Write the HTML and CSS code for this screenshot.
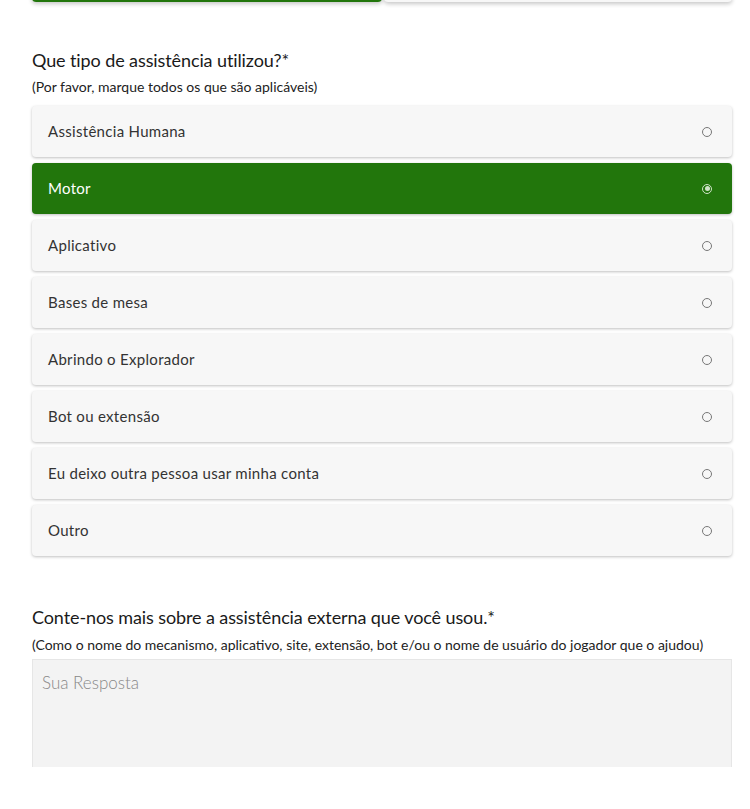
FILE: index.html
```html
<!DOCTYPE html>
<html lang="pt">
<head>
<meta charset="utf-8">
<link rel="stylesheet" href="styles.css">
</head>
<body>
<div class="page">
  <div class="top-cards">
    <div class="top-card green"></div>
    <div class="top-card gray"></div>
  </div>

  <section class="question q1">
    <h2 class="q-title">Que tipo de assistência utilizou?*</h2>
    <p class="q-sub">(Por favor, marque todos os que são aplicáveis)</p>
    <div class="options">
      <div class="option"><span>Assistência Humana</span><span class="radio"></span></div>
      <div class="option selected"><span>Motor</span><span class="radio"></span></div>
      <div class="option"><span>Aplicativo</span><span class="radio"></span></div>
      <div class="option"><span>Bases de mesa</span><span class="radio"></span></div>
      <div class="option"><span>Abrindo o Explorador</span><span class="radio"></span></div>
      <div class="option"><span>Bot ou extensão</span><span class="radio"></span></div>
      <div class="option"><span>Eu deixo outra pessoa usar minha conta</span><span class="radio"></span></div>
      <div class="option"><span>Outro</span><span class="radio"></span></div>
    </div>
  </section>

  <section class="question q2">
    <h2 class="q-title">Conte-nos mais sobre a assistência externa que você usou.*</h2>
    <p class="q-sub">(Como o nome do mecanismo, aplicativo, site, extensão, bot e/ou o nome de usuário do jogador que o ajudou)</p>
    <div class="answer">Sua Resposta</div>
  </section>
</div>
</body>
</html>
```

FILE: styles.css
```css
* { box-sizing: border-box; }
html { overflow: hidden; background: #fff; }
body { margin: 0; padding: 0; font-family: Lato, "Open Sans", sans-serif; color: #222; }
.page { width: 750px; padding: 1px 18px 0 32px; }

.top-cards { display: flex; gap: 2px; margin-top: -49px; height: 50px; }
.top-card { border-radius: 0 0 4px 4px; box-shadow: 0 2px 4px rgba(0,0,0,0.22); }
.top-card.green { flex: 0 0 350px; background: #22760c; }
.top-card.gray { flex: 1; background: #f7f7f7; }

.q1 { margin-top: 47px; }
.q2 { margin-top: 50px; }
.q-title { font-family: Lato, sans-serif; font-weight: 400; font-size: 18px; margin: 0; line-height: 22px; color: #1a1a1a; letter-spacing: -0.1px; }
.q-sub { font-family: Lato, sans-serif; font-size: 14px; margin: 7px 0 0; line-height: 17px; color: #222; }

.options { display: flex; flex-direction: column; gap: 6px; margin-top: 11px; }
.option { height: 51px; display: flex; align-items: center; justify-content: space-between; padding: 0 20px 2px 16px; background: #f7f7f7; border-radius: 4px; box-shadow: 0 1px 3px rgba(0,0,0,0.25); font-family: Lato, sans-serif; font-weight: 400; font-size: 15px; letter-spacing: 0.3px; color: #333; }
.option.selected { background: #22760c; color: #fff; }
.radio { width: 10px; height: 10px; border: 1px solid #777; border-radius: 50%; position: relative; margin-top: 2px; }
.option.selected .radio { border-color: #cfe3c8; }
.option.selected .radio::after { content: ""; position: absolute; left: 1.5px; top: 1.5px; width: 5px; height: 5px; border-radius: 50%; background: #cfe3c8; }

.q2 .q-sub { margin-top: 8px; }
.answer { margin-top: 6px; height: 108px; background: #f3f3f3; border: 1px solid #e6e6e6; border-bottom: none; padding: 12px 9px; font-family: Lato, sans-serif; font-size: 17px; color: #888; font-weight: 300; }
```
